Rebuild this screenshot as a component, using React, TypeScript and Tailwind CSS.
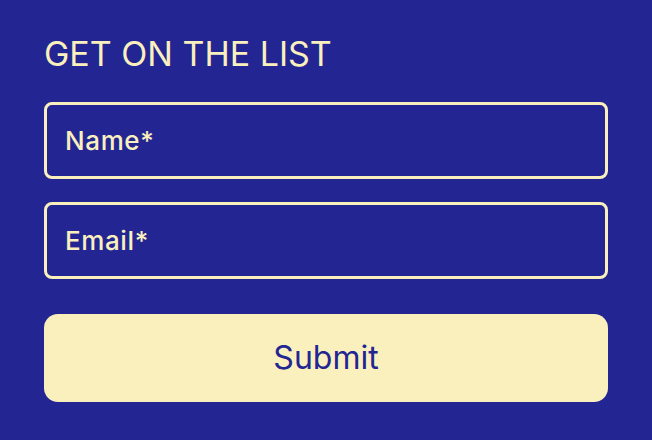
import React from "react";

export default function App() {
  return (
    <div
      className="w-[652px] h-[440px] bg-[#232592] px-[44px] pt-[36px]"
      style={{ fontFamily: 'Inter, "Noto Sans", sans-serif' }}
    >
      <h1 className="text-[34px] leading-[36px] text-[#faf0be] font-normal">GET ON THE LIST</h1>
      <div className="mt-[30px] flex flex-col gap-[23px]">
        <div className="h-[77px] rounded-[8px] border-[3px] border-[#faf0be] flex items-center px-[18px]">
          <span className="text-[26px] text-[#faf0be] font-medium tracking-[0.6px]">Name*</span>
        </div>
        <div className="h-[77px] rounded-[8px] border-[3px] border-[#faf0be] flex items-center px-[18px]">
          <span className="text-[26px] text-[#faf0be] font-medium tracking-[0.6px]">Email*</span>
        </div>
      </div>
      <button className="mt-[35px] w-full h-[88px] rounded-[14px] bg-[#faf0be] text-[#232592] text-[32px] flex items-center justify-center">
        Submit
      </button>
    </div>
  );
}
